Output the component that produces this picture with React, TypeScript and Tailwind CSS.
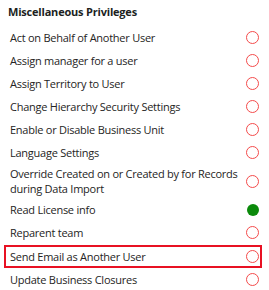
import React from "react";

const rows: { label: React.ReactNode; on?: boolean; hl?: boolean; tall?: boolean }[] = [
  { label: "Act on Behalf of Another User" },
  { label: "Assign manager for a user" },
  { label: "Assign Territory to User" },
  { label: "Change Hierarchy Security Settings" },
  { label: "Enable or Disable Business Unit" },
  { label: "Language Settings" },
  { label: "Override Created on or Created by for Records during Data Import", tall: true },
  { label: "Read License info", on: true },
  { label: "Reparent team" },
  { label: "Send Email as Another User", hl: true },
  { label: "Update Business Closures" },
];

export default function App() {
  return (
    <div className="w-[269px] h-[290px] bg-white text-[#252423] overflow-hidden" style={{ fontFamily: '"Open Sans", sans-serif' }}>
      <div className="pl-[8px] pt-[4px] h-[26px] text-[11px] font-bold leading-[16px] tracking-[-0.2px] text-[#201f1e]">Miscellaneous Privileges</div>
      <div className="flex flex-col pl-[4px] pr-[7px]">
        {rows.map((r, i) => (
          <div
            key={i}
            className={`flex items-center justify-between ${r.tall ? "h-[34px]" : "h-[23px]"} ${r.hl ? "border-2 border-[#e81123] pl-[4px] pr-[1px] mt-[1px] h-[22px]" : "pl-[6px] pr-[3px]"}`}
          >
            <span className={`text-[11px] leading-[15px] tracking-[-0.25px] ${r.tall ? "w-[232px]" : ""}`}>{r.label}</span>
            {r.on ? (
              <span className="w-[12px] h-[12px] rounded-full bg-[#0b8a0b] shrink-0" />
            ) : (
              <span className="w-[13px] h-[13px] rounded-full border-[1.5px] border-[#f44b4b] shrink-0" />
            )}
          </div>
        ))}
      </div>
    </div>
  );
}
